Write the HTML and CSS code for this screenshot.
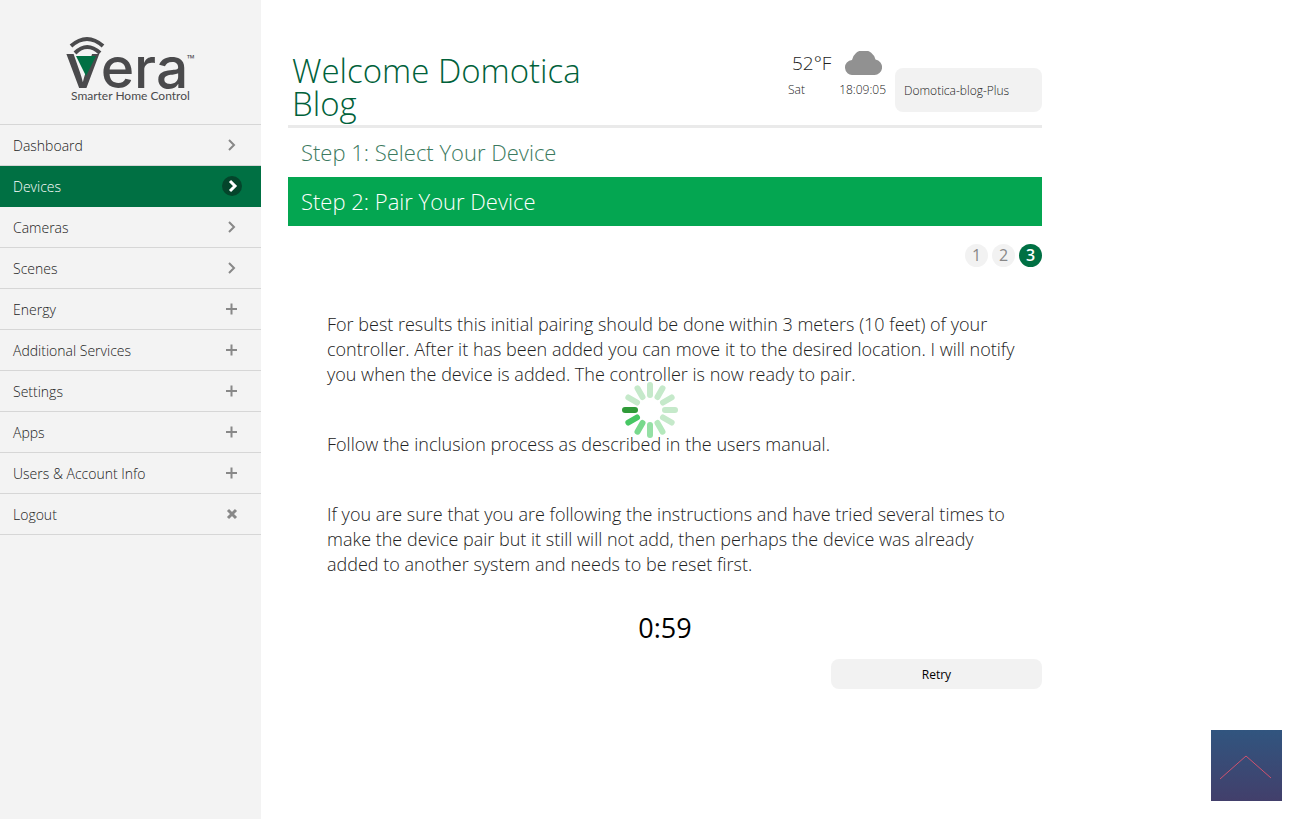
FILE: index.html
```html
<!DOCTYPE html>
<html lang="en">
<head>
    <meta charset="UTF-8">
    <meta name="viewport" content="width=device-width, initial-scale=1">
    <title>Vera - Pair Your Device</title>
    <link rel="stylesheet" href="styles.css">
</head>
<body>
    <div class="layout">
        <aside class="sidebar">
            <div class="logo">
                <svg width="136" height="72" viewBox="0 0 136 72" role="img" aria-label="Vera Smarter Home Control">
                    <path d="M9 13 Q25 -1 41 13" fill="none" stroke="#4a4a4c" stroke-width="4"/>
                    <path d="M13 20 Q25 8 38 20" fill="none" stroke="#4a4a4c" stroke-width="4"/>
                    <text class="logo-name" x="3" y="55"><tspan class="logo-v">v</tspan>era</text>
                    <polygon points="14,23 34,23 24,43" fill="#007043"/>
                    <text class="logo-tm" x="125" y="29">™</text>
                    <text class="logo-tag" x="9" y="67">Smarter Home Control</text>
                </svg>
            </div>
            <nav>
                <ul class="menu">
                    <li><a href="#">Dashboard <svg class="icon" viewBox="0 0 20 20"><path d="M7 5l5 5-5 5"/></svg></a></li>
                    <li class="active"><a href="#">Devices <svg class="icon" viewBox="0 0 20 20"><circle cx="10" cy="10" r="10"/><path d="M8 5l5 5-5 5"/></svg></a></li>
                    <li><a href="#">Cameras <svg class="icon" viewBox="0 0 20 20"><path d="M7 5l5 5-5 5"/></svg></a></li>
                    <li><a href="#">Scenes <svg class="icon" viewBox="0 0 20 20"><path d="M7 5l5 5-5 5"/></svg></a></li>
                    <li><a href="#">Energy <svg class="icon" viewBox="0 0 20 20"><path d="M4 10h11M9.500 4.500v11"/></svg></a></li>
                    <li><a href="#">Additional Services <svg class="icon" viewBox="0 0 20 20"><path d="M4 10h11M9.500 4.500v11"/></svg></a></li>
                    <li><a href="#">Settings <svg class="icon" viewBox="0 0 20 20"><path d="M4 10h11M9.500 4.500v11"/></svg></a></li>
                    <li><a href="#">Apps <svg class="icon" viewBox="0 0 20 20"><path d="M4 10h11M9.500 4.500v11"/></svg></a></li>
                    <li><a href="#">Users &amp; Account Info <svg class="icon" viewBox="0 0 20 20"><path d="M4 10h11M9.500 4.500v11"/></svg></a></li>
                    <li><a href="#">Logout <svg class="icon close" viewBox="0 0 20 20"><path d="M6 6l8 8M14 6l-8 8"/></svg></a></li>
                </ul>
            </nav>
        </aside>

        <main class="content">
            <header class="top">
                <h1>Welcome Domotica Blog</h1>
                <div class="weather">
                    <div class="weather-row">
                        <span class="temp">52°F</span>
                        <svg class="cloud" viewBox="0 0 37 24"><path d="M8 24a7.500 7.500 0 0 1-1-15 12 12 0 0 1 23.500-.5A7.800 7.800 0 0 1 29 24z"/></svg>
                    </div>
                    <div class="date-row">
                        <span>Sat</span>
                        <span>18:09:05</span>
                    </div>
                </div>
                <button type="button" class="controller">Domotica-blog-Plus</button>
            </header>

            <h2 class="step">Step 1: Select Your Device</h2>
            <h2 class="step current">Step 2: Pair Your Device</h2>

            <ol class="pages">
                <li>1</li>
                <li>2</li>
                <li class="on">3</li>
            </ol>

            <div class="instructions">
                <p>For best results this initial pairing should be done within 3 meters (10 feet) of your controller. After it has been added you can move it to the desired location. I will notify you when the device is added. The controller is now ready to pair.</p>
                <p>Follow the inclusion process as described in the users manual.</p>
                <p>If you are sure that you are following the instructions and have tried several times to make the device pair but it still will not add, then perhaps the device was already added to another system and needs to be reset first.</p>
            </div>

            <div class="timer">0:59</div>
            <button type="button" class="retry">Retry</button>
        </main>
    </div>

    <svg class="spinner" viewBox="-28 -28 56 56" aria-hidden="true">
        <g stroke-width="6" stroke-linecap="round" stroke="#c5e9ca">
            <path d="M15 0H25"/>
            <path d="M15 0H25" transform="rotate(30)"/>
            <path d="M15 0H25" transform="rotate(60)" stroke="#b4e8bc"/>
            <path d="M15 0H25" transform="rotate(90)" stroke="#95e0a5"/>
            <path d="M15 0H25" transform="rotate(120)" stroke="#78d98c"/>
            <path d="M15 0H25" transform="rotate(150)" stroke="#46c763"/>
            <path d="M15 0H25" transform="rotate(180)" stroke="#2f9a38"/>
            <path d="M15 0H25" transform="rotate(210)"/>
            <path d="M15 0H25" transform="rotate(240)"/>
            <path d="M15 0H25" transform="rotate(270)"/>
            <path d="M15 0H25" transform="rotate(300)"/>
            <path d="M15 0H25" transform="rotate(330)"/>
        </g>
    </svg>

    <a href="#" class="to-top" aria-label="Back to top">
        <svg viewBox="0 0 71 71"><path d="M9 49L35 26l25 22"/></svg>
    </a>
</body>
</html>
```
FILE: styles.css
```css
* {
    box-sizing: border-box;
}

body {
    margin: 0;
    font-family: "Open Sans", "Noto Sans", sans-serif;
    font-weight: 300;
    color: #222;
    background-color: #fff;
}

button {
    font-family: inherit;
    border: none;
    background-color: #f2f2f2;
    cursor: pointer;
}

.layout {
    display: flex;
    min-height: 100vh;
}

/* Sidebar */
.sidebar {
    flex: 0 0 261px;
    background-color: #f3f3f3;
}

.logo {
    height: 125px;
    padding: 33px 0 0 62px;
    border-bottom: 1px solid #d6d6d6;
}

.logo svg {
    display: block;
    overflow: visible;
}

.logo text {
    fill: #4a4a4c;
}

.logo-name {
    font-family: Inter, sans-serif;
    font-size: 57px;
    font-weight: 500;
}

.logo-v {
    font-size: 62px;
}

.logo-tm {
    font-size: 10px;
    font-weight: 600;
}

.logo-tag {
    font-family: Lato, sans-serif;
    font-size: 12px;
    font-weight: 400;
}

.menu {
    list-style: none;
    margin: 0;
    padding: 0;
}

.menu li {
    border-bottom: 1px solid #d6d6d6;
}

.menu a {
    display: flex;
    align-items: center;
    justify-content: space-between;
    height: 40px;
    padding: 0 19px 0 13px;
    font-size: 14px;
    color: #222;
    text-decoration: none;
}

.menu .active {
    background-color: #007043;
    border-color: #007043;
}

.menu .active a {
    color: #fff;
}

.icon {
    width: 20px;
    height: 20px;
    fill: none;
    stroke: #888;
    stroke-width: 2;
}

.icon.close {
    stroke-width: 3;
}

.active .icon {
    stroke: #fff;
    stroke-width: 3;
}

.active circle {
    fill: #04452b;
    stroke: none;
}

/* Content */
.content {
    flex: 1;
    max-width: 781px;
    padding-left: 27px;
}

.top {
    display: flex;
    align-items: flex-start;
    height: 128px;
    border-bottom: 3px solid #eaeaea;
}

h1 {
    width: 320px;
    margin: 54px auto 0 4px;
    font-size: 33px;
    font-weight: 300;
    line-height: 33px;
    color: #00613a;
}

.weather {
    width: 98px;
    margin: 49px 9px 0 0;
}

.weather-row {
    display: flex;
    align-items: center;
    justify-content: space-between;
    height: 27px;
    padding: 0 4px;
}

.temp {
    font-size: 19px;
}

.cloud {
    width: 37px;
    height: 24px;
    fill: #919191;
}

.date-row {
    display: flex;
    justify-content: space-between;
    margin-top: 5px;
    font-size: 12px;
    line-height: 18px;
}

.controller {
    width: 147px;
    height: 44px;
    margin-top: 68px;
    padding: 0 9px;
    border-radius: 8px;
    font-size: 12px;
    font-weight: 300;
    color: #222;
    text-align: left;
}

.step {
    margin: 0;
    padding: 0 13px;
    font-size: 22px;
    font-weight: 300;
    line-height: 49px;
    color: #3c7a60;
}

.step.current {
    background-color: #04a651;
    color: #fff;
}

.pages {
    display: flex;
    justify-content: flex-end;
    gap: 4px;
    margin: 18px 0 0;
    padding: 0;
    list-style: none;
}

.pages li {
    width: 23px;
    height: 23px;
    border-radius: 50%;
    background-color: #f2f2f2;
    font-size: 16px;
    font-weight: 400;
    line-height: 23px;
    text-align: center;
    color: #888;
}

.pages .on {
    background-color: #007043;
    font-weight: 600;
    color: #fff;
}

.instructions {
    padding: 45px 22px 0 39px;
}

.instructions p {
    margin: 0 0 45px;
    font-size: 18px;
    line-height: 25px;
}

.instructions p:last-child {
    margin-bottom: 33px;
}

.timer {
    font-size: 27px;
    font-weight: 400;
    line-height: 36px;
    text-align: center;
    color: #000;
}

.retry {
    display: block;
    width: 28%;
    height: 30px;
    margin: 13px 0 0 auto;
    border-radius: 8px;
    font-size: 12px;
    color: #000;
}

/* Floating items */
.spinner {
    position: fixed;
    top: 50%;
    left: 50%;
    width: 56px;
    height: 56px;
    margin: -28px 0 0 -28px;
}

.to-top {
    position: fixed;
    right: 18px;
    bottom: 18px;
    width: 71px;
    height: 71px;
    background-image: linear-gradient(#31557f, #423f6b);
}

.to-top path {
    fill: none;
    stroke: #d0526f;
    stroke-width: 1;
}
```
